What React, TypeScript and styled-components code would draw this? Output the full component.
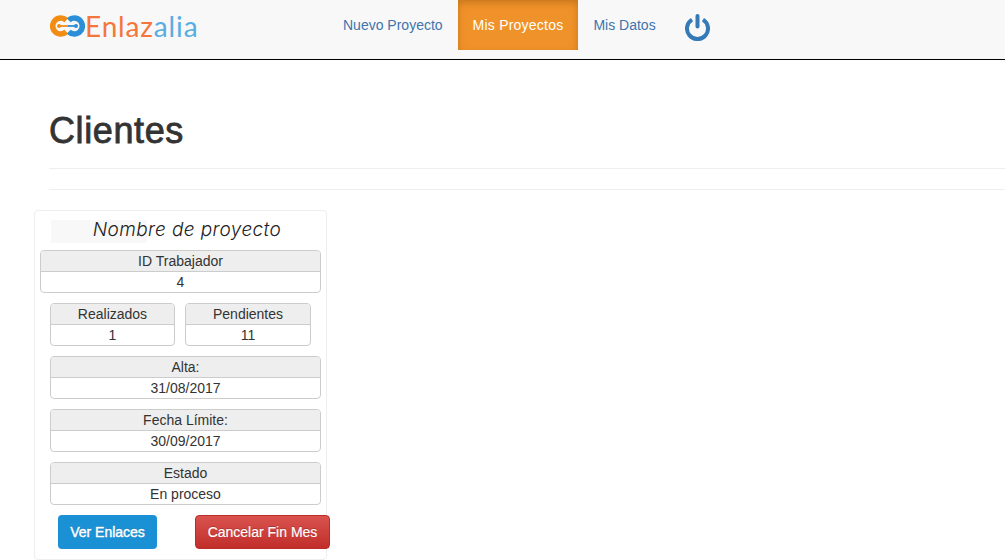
import React from "react";
import { styled, createGlobalStyle } from "styled-components";

const GlobalStyle = createGlobalStyle`
  html, body {
    margin: 0;
    padding: 0;
    background: #fff;
    overflow-x: hidden;
  }
  body {
    font-family: "Liberation Sans", Arial, sans-serif;
    font-size: 14px;
    line-height: 20px;
    color: #333;
  }
  * {
    box-sizing: border-box;
  }
`;

const App = () => {
  return (
    <>
      <GlobalStyle />
      <Navbar>
        <Brand>
          <LogoIcon />
          <BrandText>
            Enlaz<BrandEnd>alia</BrandEnd>
          </BrandText>
        </Brand>
        <NavList>
          <NavLink>Nuevo Proyecto</NavLink>
          <NavLink active>Mis Proyectos</NavLink>
          <NavLink>Mis Datos</NavLink>
          <PowerItem>
            <PowerIcon />
          </PowerItem>
        </NavList>
      </Navbar>
      <Content>
        <PageHeader>
          <Title>Clientes</Title>
        </PageHeader>
        <Rule />
      </Content>
      <Card>
        <CardTitleWrap>
          <TitleBand />
          <CardTitle>Nombre de proyecto</CardTitle>
        </CardTitleWrap>
        <InfoBox label="ID Trabajador" value="4" wide />
        <Row>
          <InfoBox label="Realizados" value="1" />
          <InfoBox label="Pendientes" value="11" />
        </Row>
        <InfoBox label="Alta:" value="31/08/2017" />
        <InfoBox label="Fecha Límite:" value="30/09/2017" />
        <InfoBox label="Estado" value="En proceso" />
        <Actions>
          <BlueButton>Ver Enlaces</BlueButton>
          <RedButton>Cancelar Fin Mes</RedButton>
        </Actions>
      </Card>
    </>
  );
};

export default App;

const InfoBox = ({ label, value, wide }: { label: string; value: string; wide?: boolean }) => (
  <Box wide={wide}>
    <BoxHead>{label}</BoxHead>
    <BoxValue>{value}</BoxValue>
  </Box>
);

const LogoIcon = () => (
  <svg width="35" height="22" viewBox="0 0 35 22" fill="none">
    <path d="M16.3 5.3A8 8 0 1 0 16.3 16.7" stroke="#f28c12" strokeWidth="5.6" />
    <path d="M18.7 5.3A8 8 0 1 1 18.7 16.7" stroke="#2a8fd6" strokeWidth="5.6" />
    <path d="M9 11H17.5" stroke="#f28c12" strokeWidth="1.8" />
    <path d="M17.5 11H26" stroke="#2a8fd6" strokeWidth="1.8" />
    <circle cx="9" cy="11" r="2" fill="#f28c12" />
    <circle cx="26" cy="11" r="2" fill="#2a8fd6" />
  </svg>
);

const PowerIcon = () => (
  <svg width="25" height="27" viewBox="0 0 25 27" fill="none">
    <path d="M7 5.6A10.5 10.5 0 1 0 18 5.6" stroke="#337ab7" strokeWidth="4" />
    <path d="M12.5 2V12.5" stroke="#337ab7" strokeWidth="4" strokeLinecap="round" />
  </svg>
);

const Navbar = styled.div`
  display: flex;
  height: 60px;
  background: #f8f8f8;
  border-bottom: 1px solid #000;
  padding-left: 50px;
`;

const Brand = styled.div`
  display: flex;
  align-items: center;
  width: 278px;
  height: 52px;
`;

const BrandText = styled.span`
  font-family: Lato, sans-serif;
  font-weight: 400;
  font-size: 28px;
  letter-spacing: 0.85px;
  color: #f4763a;
`;

const BrandEnd = styled.span`
  color: #56aee2;
`;

const NavList = styled.div`
  display: flex;
  align-items: flex-start;
`;

const NavLink = styled.a<{ active?: boolean }>`
  display: block;
  height: 50px;
  padding: 15px;
  letter-spacing: ${({ active }) => (active ? "0.22px" : "0")};
  color: ${({ active }) => (active ? "#fff" : "#3f74ad")};
  background: ${({ active }) => (active ? "#f0922a" : "transparent")};
  box-shadow: ${({ active }) => (active ? "inset 0 3px 7px rgba(120, 70, 0, 0.35)" : "none")};
`;

const PowerItem = styled.div`
  padding: 14px 0 0 14px;
`;

const Content = styled.div`
  padding-left: 49px;
`;

const PageHeader = styled.div`
  height: 109px;
  padding-top: 51px;
  border-bottom: 1px solid #eee;
`;

const Title = styled.h1`
  margin: 0;
  font-size: 36px;
  line-height: 40px;
  font-weight: 400;
  letter-spacing: 0.6px;
  -webkit-text-stroke: 0.8px #333;
`;

const Rule = styled.div`
  height: 1px;
  margin-top: 20px;
  background: #eee;
`;

const Card = styled.div`
  width: 293px;
  height: 350px;
  margin: 20px 0 0 34px;
  padding: 0 5px;
  background: #fff;
  border: 1px solid #eee;
  border-radius: 4px;
`;

const CardTitleWrap = styled.div`
  position: relative;
  height: 39px;
  text-align: center;
`;

const TitleBand = styled.div`
  position: absolute;
  left: 11px;
  top: 9px;
  width: 96px;
  height: 23px;
  background: #f8f8f8;
`;

const CardTitle = styled.div`
  position: relative;
  padding: 7px 0 0 13px;
  font-family: Inter, sans-serif;
  font-style: italic;
  font-weight: 300;
  font-size: 19px;
  line-height: 24px;
  letter-spacing: 0.4px;
  color: #222;
`;

const Box = styled.div<{ wide?: boolean }>`
  height: 43px;
  margin: 0 0 10px ${({ wide }) => (wide ? "0" : "10px")};
  border: 1px solid #ccc;
  border-radius: 4px;
  text-align: center;
  overflow: hidden;
`;

const BoxHead = styled.div`
  height: 21px;
  line-height: 20px;
  background: #eee;
  border-bottom: 1px solid #ccc;
`;

const BoxValue = styled.div`
  height: 20px;
  line-height: 20px;
`;

const Row = styled.div`
  display: grid;
  grid-template-columns: 135px 136px;
  width: 271px;
`;

const Actions = styled.div`
  display: flex;
  padding-left: 18px;
`;

const BlueButton = styled.a`
  width: 99px;
  height: 34px;
  flex-shrink: 0;
  line-height: 34px;
  text-align: center;
  color: #fff;
  background: #1a90d5;
  border-radius: 4px;
  -webkit-text-stroke: 0.4px #fff;
  text-shadow: 0 -1px 0 rgba(0, 0, 0, 0.2);
`;

const RedButton = styled.a`
  width: 135px;
  height: 34px;
  margin-left: 38px;
  flex-shrink: 0;
  line-height: 32px;
  text-align: center;
  color: #fff;
  background: linear-gradient(to bottom, #d9534f 0%, #c12e2a 100%);
  border: 1px solid #b92c28;
  border-radius: 4px;
  -webkit-text-stroke: 0.15px #fff;
  text-shadow: 0 -1px 0 rgba(0, 0, 0, 0.2);
`;
